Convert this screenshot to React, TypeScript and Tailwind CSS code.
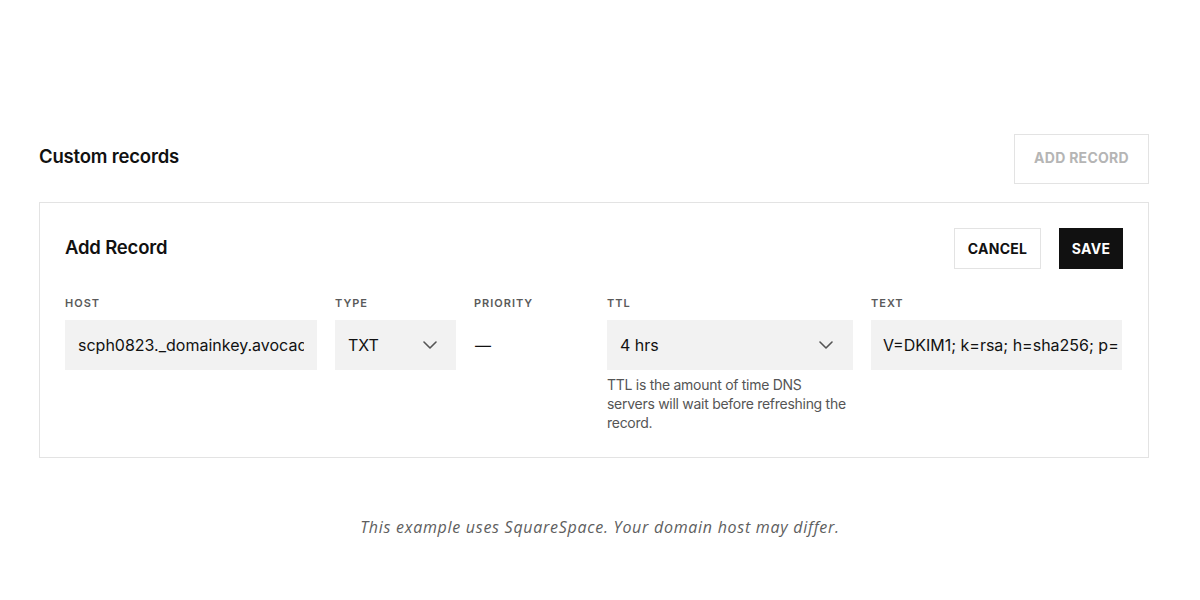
import React from "react";

const Chevron = () => (
  <svg width="14" height="8" viewBox="0 0 14 8" fill="none" className="shrink-0">
    <path d="M1 1l6 6 6-6" stroke="#555" strokeWidth="1.6" strokeLinecap="round" strokeLinejoin="round" />
  </svg>
);

const Label = ({ children }: { children: React.ReactNode }) => (
  <div className="text-[11px] leading-[16px] font-semibold tracking-[0.09em] text-[#5a5a5a] uppercase mb-[9px]">
    {children}
  </div>
);

export default function App() {
  return (
    <div
      className="w-[1200px] h-[600px] bg-white text-[#111]"
      style={{ fontFamily: "Inter, 'Liberation Sans', sans-serif" }}
    >
      <div className="pt-[134px] pl-[39px] w-[1149px]">
        <div className="flex items-center justify-between">
          <h2 className="text-[18.5px] font-semibold tracking-[-0.01em] mb-[5px]">Custom records</h2>
          <button className="h-[50px] w-[135px] pb-[3px] border border-[#e3e3e3] text-[14px] font-bold tracking-[0.02em] text-[#b5b5b5]">
            ADD RECORD
          </button>
        </div>
        <div className="mt-[18px] border border-[#e3e3e3] px-[25px] pt-[25px] pb-[25px]">
          <div className="flex items-center justify-between">
            <h3 className="text-[18.5px] font-semibold tracking-[-0.01em] mb-[2px]">Add Record</h3>
            <div className="flex gap-[18px]">
              <button className="h-[41px] w-[87px] pb-[1px] border border-[#e3e3e3] text-[14px] font-bold tracking-[0.02em] text-[#111]">
                CANCEL
              </button>
              <button className="h-[41px] w-[64px] pb-[1px] bg-[#111] text-[14px] font-bold tracking-[0.02em] text-white">
                SAVE
              </button>
            </div>
          </div>
          <div className="mt-[26px] grid grid-cols-[252px_121px_115px_246px_251px] gap-x-[18px] text-[16px]">
            <div>
              <Label>Host</Label>
              <div className="h-[50px] bg-[#f2f2f2] px-[13px] flex items-center">
                <div className="overflow-hidden whitespace-nowrap">scph0823._domainkey.avocado.dns</div>
              </div>
            </div>
            <div>
              <Label>Type</Label>
              <div className="h-[50px] bg-[#f2f2f2] pl-[13px] pr-[19px] flex items-center justify-between">
                <span>TXT</span>
                <Chevron />
              </div>
            </div>
            <div>
              <Label>Priority</Label>
              <div className="h-[50px] pl-[1px] flex items-center">—</div>
            </div>
            <div>
              <Label>TTL</Label>
              <div className="h-[50px] bg-[#f2f2f2] pl-[13px] pr-[20px] flex items-center justify-between">
                <span>4 hrs</span>
                <Chevron />
              </div>
              <p className="mt-[5px] w-[243px] text-[14px] leading-[19px] tracking-[-0.02em] text-[#555]">
                TTL is the amount of time DNS servers will wait before refreshing the record.
              </p>
            </div>
            <div>
              <Label>Text</Label>
              <div className="h-[50px] bg-[#f2f2f2] pl-[12px] pr-[2px] flex items-center">
                <div className="overflow-hidden whitespace-nowrap">V=DKIM1; k=rsa; h=sha256; p=</div>
              </div>
            </div>
          </div>
        </div>
      </div>
      <p
        className="mt-[57px] text-center italic text-[16px] text-[#5e5e5e] tracking-[0.045em]"
        style={{ fontFamily: "'Open Sans', Lato, sans-serif" }}
      >
        This example uses SquareSpace. Your domain host may differ.
      </p>
    </div>
  );
}
